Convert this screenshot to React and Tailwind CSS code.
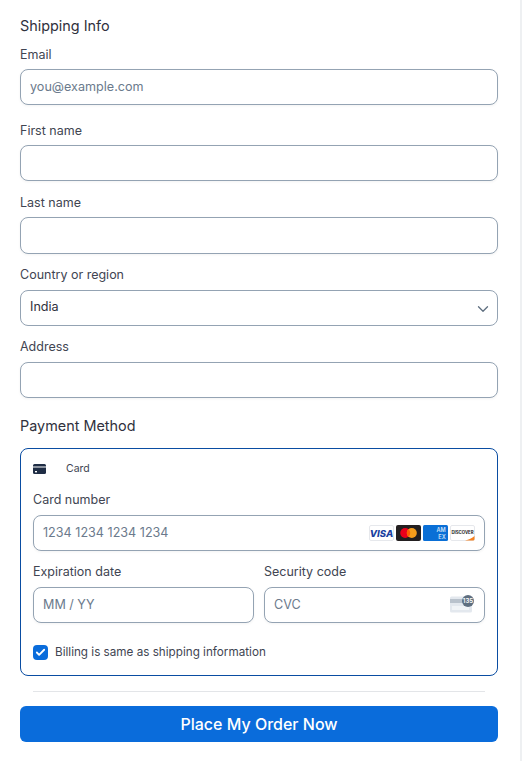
import { ChevronDown, Check } from "lucide-react";

const font = { fontFamily: "Inter, 'Liberation Sans', sans-serif" };

function Field({ label, placeholder, value, className = "", inputClass = "h-[36px]", labelClass = "leading-[20px]" }) {
  return (
    <div className={className}>
      <label className={`block h-[20px] text-[12.5px] text-[#414552] ${labelClass}`}>{label}</label>
      <div className={`mt-[4px] flex items-center rounded-[8px] border border-[#94a3b3] bg-white px-[9px] text-[12.6px] text-[#6b7a8c] shadow-[0_1px_3px_rgba(0,0,0,0.05)] ${inputClass}`}>
        {value || placeholder}
      </div>
    </div>
  );
}

function VisaLogo() {
  return (
    <svg width="25" height="16" viewBox="0 0 25 16">
      <rect x="0.5" y="0.5" width="24" height="15" rx="1.5" fill="#fff" stroke="#e6e8ec" />
      <text x="12.5" y="11.5" textAnchor="middle" fontSize="9.5" fontWeight="800" fontStyle="italic" fill="#1a3fa0" fontFamily="Inter, sans-serif">VISA</text>
    </svg>
  );
}

function MastercardLogo() {
  return (
    <svg width="25" height="16" viewBox="0 0 25 16">
      <rect width="25" height="16" rx="2" fill="#231f20" />
      <circle cx="9.2" cy="8" r="5" fill="#eb001b" />
      <circle cx="15.8" cy="8" r="5" fill="#f79e1b" />
      <path d="M12.5 4.2a5 5 0 0 1 0 7.6a5 5 0 0 1 0-7.6z" fill="#ff5f00" />
    </svg>
  );
}

function AmexLogo() {
  return (
    <svg width="25" height="16" viewBox="0 0 25 16">
      <rect width="25" height="16" rx="1.5" fill="#0a6fd6" />
      <text x="18" y="7" textAnchor="middle" fontSize="5.6" fill="#cfe3f8" fontFamily="Inter, sans-serif" fontWeight="600">AM</text>
      <text x="19" y="14" textAnchor="middle" fontSize="5.6" fill="#cfe3f8" fontFamily="Inter, sans-serif" fontWeight="600">EX</text>
    </svg>
  );
}

function DiscoverLogo() {
  return (
    <svg width="25" height="16" viewBox="0 0 25 16">
      <rect x="0.5" y="0.5" width="24" height="15" rx="1.5" fill="#fff" stroke="#e6e8ec" />
      <text x="12.5" y="9.2" textAnchor="middle" fontSize="4.3" fontWeight="700" fill="#222" fontFamily="Inter, sans-serif">DISCOVER</text>
      <path d="M15 15.5C19 14.5 22 13.5 24.5 11V14a1.5 1.5 0 0 1-1.5 1.5z" fill="#f58220" />
    </svg>
  );
}

function CvcIcon() {
  return (
    <svg width="24" height="18" viewBox="0 0 24 18">
      <rect x="0" y="1.5" width="22" height="16" rx="1.5" fill="#e3e8ee" />
      <rect x="0" y="4" width="22" height="4" fill="#b9c2cc" />
      <rect x="2" y="11" width="17" height="4" fill="#f1f4f7" />
      <circle cx="18" cy="6" r="6" fill="#5f6f80" />
      <text x="18" y="8.2" textAnchor="middle" fontSize="6.2" fontWeight="600" fill="#fff" fontFamily="Inter, sans-serif">135</text>
    </svg>
  );
}

export default function App() {
  return (
    <div className="flex h-[761px] w-full overflow-hidden bg-white" style={font}>
      <div className="flex-1 pl-[20px] pr-[22px]">
        <h2 className="mt-[16px] h-[20px] text-[14.4px] leading-[20px] text-[#30313d]">Shipping Info</h2>
        <Field className="mt-[9px]" label="Email" placeholder="you@example.com" />
        <Field className="mt-[16px]" label="First name" />
        <Field className="mt-[12px]" label="Last name" inputClass="h-[37px]" />
        <div className="mt-[12px]">
          <label className="block h-[20px] text-[12.5px] leading-[18px] text-[#414552]">Country or region</label>
          <div className="mt-[4px] flex h-[36px] items-center justify-between rounded-[8px] border border-[#94a3b3] bg-white px-[9px] pb-[1px] text-[12.6px] text-[#30313d]">
            India
            <ChevronDown size={18} strokeWidth={1.75} className="-mr-[4px] mt-[3px] text-[#5f6f80]" />
          </div>
        </div>
        <Field className="mt-[12px]" label="Address" labelClass="leading-[18px]" />

        <h2 className="mt-[18px] h-[20px] text-[14.4px] leading-[20px] text-[#30313d]">Payment Method</h2>
        <div className="mt-[12px] h-[228px] rounded-[8px] border border-[#0a4da2] px-[12px]">
          <div className="flex h-[38px] items-center">
            <svg width="13" height="10" viewBox="0 0 13 10" className="mt-[1px]">
              <path d="M1.5 0h10A1.5 1.5 0 0 1 13 1.5V2.5H0V1.5A1.5 1.5 0 0 1 1.5 0z" fill="#1f2d45" />
              <path d="M0 3.6h13V8.5A1.5 1.5 0 0 1 11.5 10h-10A1.5 1.5 0 0 1 0 8.5z" fill="#1f2d45" />
              <rect x="2" y="7" width="2" height="1.4" fill="#fff" />
            </svg>
            <span className="ml-[20px] mt-[1px] text-[10.5px] text-[#414552]">Card</span>
          </div>
          <Field className="mt-[4px]" label="Card number" placeholder="1234 1234 1234 1234" labelClass="leading-[18px]" inputClass="h-[36px] pt-[1px]" />
          <div className="relative -mt-[36px] flex h-[36px] items-center justify-end gap-[2px] pr-[10px]">
            <VisaLogo />
            <MastercardLogo />
            <AmexLogo />
            <DiscoverLogo />
          </div>
          <div className="mt-[12px] grid grid-cols-2 gap-[10px]">
            <Field label="Expiration date" placeholder="MM / YY" labelClass="leading-[18px]" />
            <div className="relative">
              <Field label="Security code" placeholder="CVC" labelClass="leading-[18px]" />
              <div className="absolute right-[11px] top-[32px]">
                <CvcIcon />
              </div>
            </div>
          </div>
          <div className="mt-[20px] flex items-center gap-[7px]">
            <div className="flex h-[15px] w-[15px] items-center justify-center rounded-[4px] bg-[#0a6cdb]">
              <Check size={11} strokeWidth={4} className="text-white" />
            </div>
            <span className="mt-[1px] text-[11.7px] text-[#414552]">Billing is same as shipping information</span>
          </div>
        </div>
        <div className="mx-[13px] mt-[15px] border-t border-[#e3e5e8]" />
        <button className="mt-[14px] h-[36px] w-full rounded-[6px] bg-[#0a6cdb] text-[16px] font-medium text-white">
          Place My Order Now
        </button>
      </div>
      <div className="w-[2px] bg-[#eef0f2]" />
    </div>
  );
}
